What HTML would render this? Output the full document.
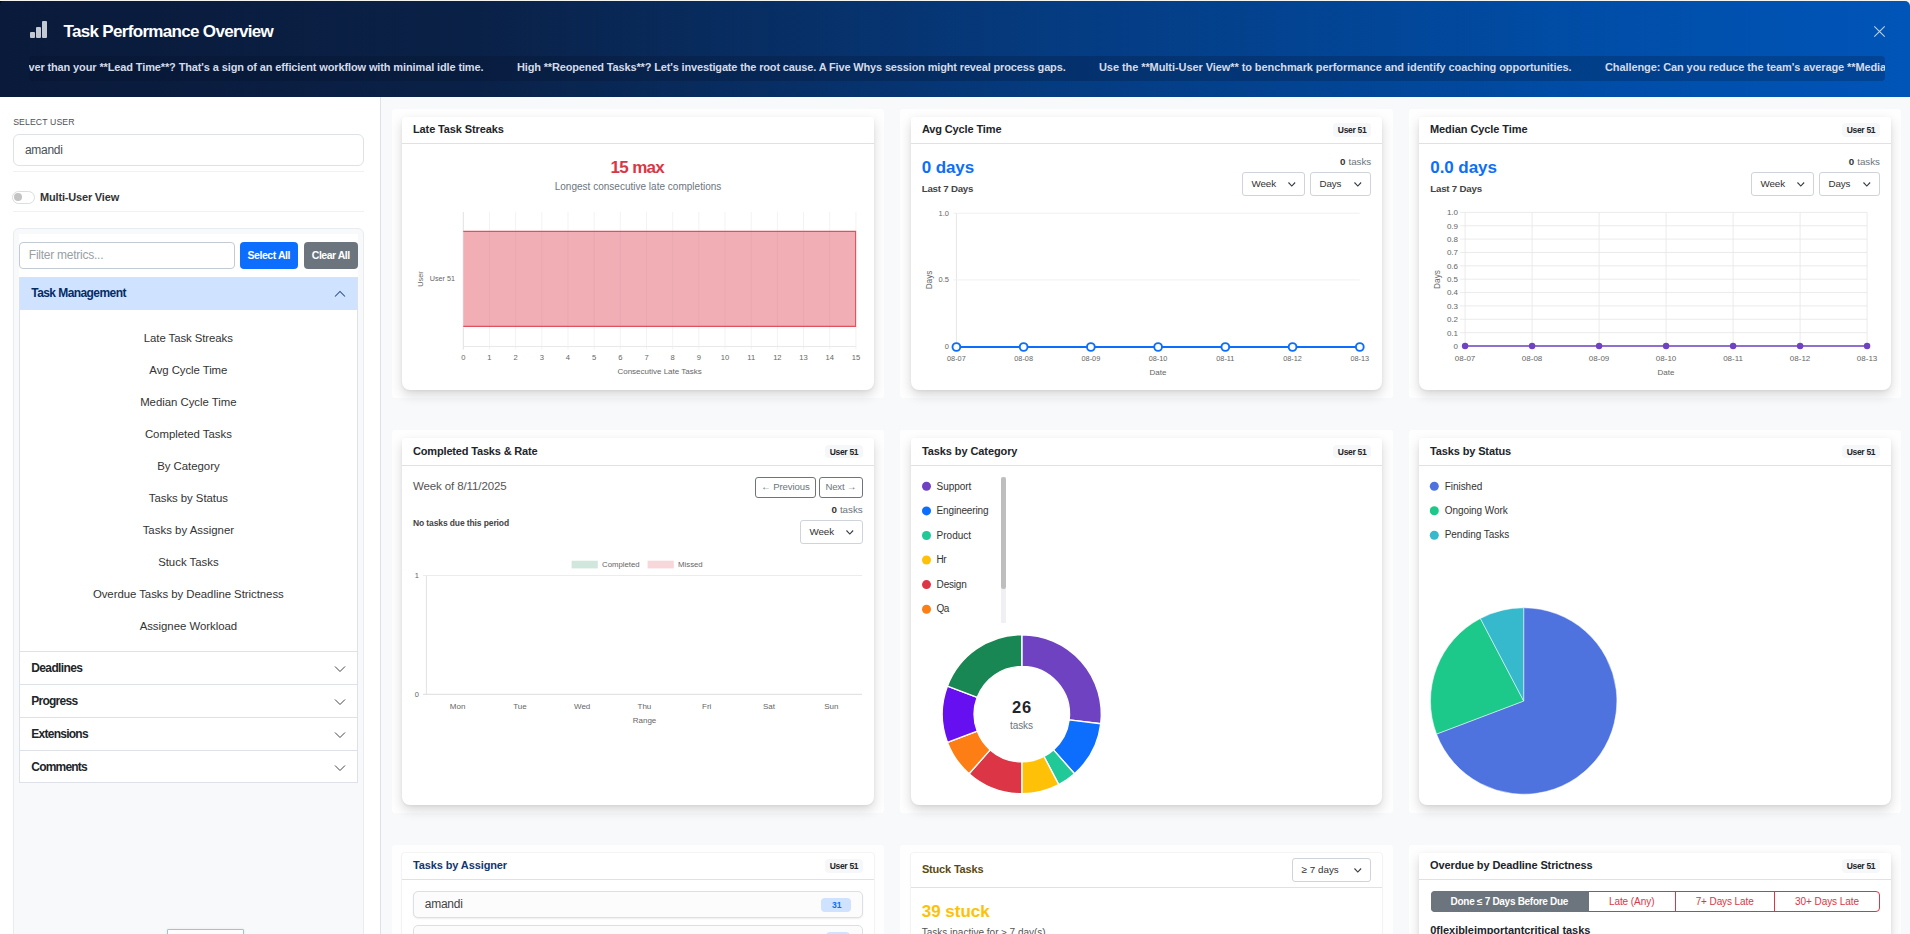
<!DOCTYPE html>
<html><head><meta charset="utf-8"><title>Task Performance Overview</title>
<style>
html,body{margin:0;padding:0;overflow:hidden;width:1910px;height:934px}
#root{position:absolute;left:0;top:0;width:1910px;height:934px;overflow:hidden;background:#f8f9fa}
body{width:1910px;height:934px;overflow:hidden;position:relative;background:#f8f9fa;font-family:"Liberation Sans",sans-serif;}
.t{position:absolute;white-space:nowrap;display:block}
.b{position:absolute;box-sizing:border-box}
svg{position:absolute;overflow:visible}
</style></head><body><div id="root">

<div class="b" style="left:0px;top:0px;width:1910px;height:2px;background:#f4f4f1;"></div>
<div class="b" style="left:0px;top:1px;width:4px;height:4px;background:#04060c;"></div>
<div class="b" style="left:0px;top:1px;width:1910px;height:96px;background:linear-gradient(90deg,#0a1a3a 0%,#0a2147 25%,#053b80 55%,#004ea9 85%,#0055b8 100%);border-radius:4px 5px 0 0;"></div>
<div class="b" style="left:0px;top:0px;width:1910px;height:1px;background:#8a93a3;opacity:.0"></div>
<div class="b" style="left:30px;top:32px;width:4.8px;height:5.799999999999997px;background:#c3c8d3;border-radius:1px;"></div>
<div class="b" style="left:36.2px;top:27px;width:4.8px;height:10.799999999999997px;background:#c3c8d3;border-radius:1px;"></div>
<div class="b" style="left:42.4px;top:21px;width:4.8px;height:16.799999999999997px;background:#c3c8d3;border-radius:1px;"></div>
<span class="t" style="left:63.50px;top:22px;font-size:17px;line-height:19px;color:#fff;font-weight:700;letter-spacing:-0.678px;">Task Performance Overview</span>
<div class="b" style="left:29px;top:56px;width:1856px;height:25px;background:rgba(3,12,35,.22);border-radius:4px;"></div>
<div class="b" style="left:29px;top:56px;width:1856px;height:25px;overflow:hidden">
<span class="t" style="left:-0.62px;top:5px;font-size:11px;line-height:12px;color:#d3dbe9;font-weight:700;letter-spacing:-0.124px;">ver than your **Lead Time**? That&#x27;s a sign of an efficient workflow with minimal idle time.</span>
<span class="t" style="left:488.00px;top:5px;font-size:11px;line-height:12px;color:#d3dbe9;font-weight:700;letter-spacing:-0.153px;">High **Reopened Tasks**? Let&#x27;s investigate the root cause. A Five Whys session might reveal process gaps.</span>
<span class="t" style="left:1070.00px;top:5px;font-size:11px;line-height:12px;color:#d3dbe9;font-weight:700;letter-spacing:-0.073px;">Use the **Multi-User View** to benchmark performance and identify coaching opportunities.</span>
<span class="t" style="left:1576.00px;top:5px;font-size:11px;line-height:12px;color:#d3dbe9;font-weight:700;letter-spacing:-0.100px;">Challenge: Can you reduce the team&#x27;s average **Median Cycle Time**</span>
</div>
<svg style="left:1874px;top:26px" width="11" height="11" viewBox="0 0 11 11"><path d="M0.3 0.3 L10.7 10.7 M10.7 0.3 L0.3 10.7" stroke="#c4d2e8" stroke-width="1.05" fill="none"/></svg>
<div class="b" style="left:0px;top:97px;width:380px;height:837px;background:#fff;"></div>
<div class="b" style="left:380px;top:97px;width:1px;height:837px;background:#dee2e6;"></div>
<span class="t" style="left:13.20px;top:117px;font-size:8.7px;line-height:10px;color:#4d5258;letter-spacing:0.111px;">SELECT USER</span>
<div class="b" style="left:13px;top:134px;width:351px;height:32px;background:#fff;border:1px solid #dee2e6;border-radius:6px;"></div>
<span class="t" style="left:25.00px;top:143px;font-size:12px;line-height:14px;color:#495057;letter-spacing:-0.309px;">amandi</span>
<div class="b" style="left:13px;top:171px;width:351px;height:1px;background:#f1f1f1;"></div>
<div class="b" style="left:12px;top:191px;width:23px;height:12.6px;background:#fff;border:1px solid #dadde1;border-radius:7px;"></div>
<div class="b" style="left:13.8px;top:193.4px;width:8px;height:8px;background:#c4c4c4;border-radius:50%;"></div>
<span class="t" style="left:40.00px;top:191px;font-size:11px;line-height:12px;color:#333;font-weight:700;letter-spacing:-0.180px;">Multi-User View</span>
<div class="b" style="left:13px;top:211px;width:351px;height:1px;background:#f1f1f1;"></div>
<div class="b" style="left:13px;top:228px;width:351px;height:720px;background:#f8f9fa;border:1px solid #e9ecef;border-radius:6px;"></div>
<div class="b" style="left:19px;top:234px;width:339px;height:44px;background:#fff;"></div>
<div class="b" style="left:19px;top:242px;width:216px;height:27px;background:#fff;border:1px solid #c2cad3;border-radius:4px;"></div>
<span class="t" style="left:28.80px;top:248px;font-size:12px;line-height:14px;color:#9aa0a6;letter-spacing:-0.245px;">Filter metrics...</span>
<div class="b" style="left:240px;top:242px;width:58px;height:27px;background:#0d6efd;border-radius:4px;"></div>
<span class="t" style="left:247.53px;top:249px;font-size:10.5px;line-height:12px;color:#fff;font-weight:700;letter-spacing:-0.438px;">Select All</span>
<div class="b" style="left:304px;top:242px;width:54px;height:27px;background:#6c757d;border-radius:4px;"></div>
<span class="t" style="left:311.77px;top:249px;font-size:10.5px;line-height:12px;color:#fff;font-weight:700;letter-spacing:-0.468px;">Clear All</span>
<div class="b" style="left:19px;top:277px;width:339px;height:506px;background:#fff;border:1px solid #dee2e6;border-top:none;"></div>
<div class="b" style="left:20px;top:278px;width:337px;height:32px;background:#cfe2ff;"></div>
<div class="b" style="left:19px;top:277px;width:339px;height:1px;background:#dee2e6;"></div>
<span class="t" style="left:31.30px;top:286px;font-size:12px;line-height:14px;color:#052c65;font-weight:700;letter-spacing:-0.576px;">Task Management</span>
<svg style="left:334px;top:289.5px" width="12" height="8" viewBox="0 0 12 8"><path d="M1 6.5 L6 1.5 L11 6.5" stroke="#2a4d85" stroke-width="1.05" fill="none"/></svg>
<span class="t" style="left:143.86px;top:332px;font-size:11.4px;line-height:12px;color:#333;letter-spacing:-0.082px;">Late Task Streaks</span>
<span class="t" style="left:149.37px;top:364px;font-size:11.4px;line-height:12px;color:#333;letter-spacing:-0.070px;">Avg Cycle Time</span>
<span class="t" style="left:140.14px;top:396px;font-size:11.4px;line-height:12px;color:#333;letter-spacing:-0.025px;">Median Cycle Time</span>
<span class="t" style="left:144.89px;top:428px;font-size:11.4px;line-height:12px;color:#333;letter-spacing:-0.015px;">Completed Tasks</span>
<span class="t" style="left:157.14px;top:460px;font-size:11.4px;line-height:12px;color:#333;letter-spacing:-0.020px;">By Category</span>
<span class="t" style="left:148.87px;top:492px;font-size:11.4px;line-height:12px;color:#333;letter-spacing:-0.055px;">Tasks by Status</span>
<span class="t" style="left:142.66px;top:524px;font-size:11.4px;line-height:12px;color:#333;letter-spacing:0.016px;">Tasks by Assigner</span>
<span class="t" style="left:158.14px;top:556px;font-size:11.4px;line-height:12px;color:#333;letter-spacing:-0.010px;">Stuck Tasks</span>
<span class="t" style="left:92.88px;top:588px;font-size:11.4px;line-height:12px;color:#333;letter-spacing:-0.039px;">Overdue Tasks by Deadline Strictness</span>
<span class="t" style="left:139.64px;top:620px;font-size:11.4px;line-height:12px;color:#333;letter-spacing:-0.030px;">Assignee Workload</span>
<div class="b" style="left:19px;top:651px;width:339px;height:1px;background:#dee2e6;"></div>
<span class="t" style="left:31.30px;top:661px;font-size:12px;line-height:14px;color:#212529;font-weight:700;letter-spacing:-0.632px;">Deadlines</span>
<svg style="left:333.5px;top:664.5px" width="12" height="8" viewBox="0 0 12 8"><path d="M1 1.5 L6 6.5 L11 1.5" stroke="#444" stroke-width="1.0" fill="none"/></svg>
<div class="b" style="left:19px;top:684px;width:339px;height:1px;background:#dee2e6;"></div>
<span class="t" style="left:31.30px;top:694px;font-size:12px;line-height:14px;color:#212529;font-weight:700;letter-spacing:-0.753px;">Progress</span>
<svg style="left:333.5px;top:697.5px" width="12" height="8" viewBox="0 0 12 8"><path d="M1 1.5 L6 6.5 L11 1.5" stroke="#444" stroke-width="1.0" fill="none"/></svg>
<div class="b" style="left:19px;top:717px;width:339px;height:1px;background:#dee2e6;"></div>
<span class="t" style="left:31.30px;top:727px;font-size:12px;line-height:14px;color:#212529;font-weight:700;letter-spacing:-0.751px;">Extensions</span>
<svg style="left:333.5px;top:730.5px" width="12" height="8" viewBox="0 0 12 8"><path d="M1 1.5 L6 6.5 L11 1.5" stroke="#444" stroke-width="1.0" fill="none"/></svg>
<div class="b" style="left:19px;top:750px;width:339px;height:1px;background:#dee2e6;"></div>
<span class="t" style="left:31.30px;top:760px;font-size:12px;line-height:14px;color:#212529;font-weight:700;letter-spacing:-0.814px;">Comments</span>
<svg style="left:333.5px;top:763.5px" width="12" height="8" viewBox="0 0 12 8"><path d="M1 1.5 L6 6.5 L11 1.5" stroke="#444" stroke-width="1.0" fill="none"/></svg>
<div class="b" style="left:167px;top:929px;width:77px;height:20px;background:#fdfdfd;border:1px solid #8ccaec;border-radius:1px;box-shadow:0 0 3px rgba(0,0,0,.08);"></div>
<div class="b" style="left:392px;top:109px;width:492.33px;height:288.6px;background:#fefefe;border-radius:3px;"></div>
<div class="b" style="left:900.3px;top:109px;width:492.33px;height:288.6px;background:#fefefe;border-radius:3px;"></div>
<div class="b" style="left:1408.9px;top:109px;width:492.33px;height:288.6px;background:#fefefe;border-radius:3px;"></div>
<div class="b" style="left:402px;top:116.8px;width:472px;height:273.2px;background:#fff;border-radius:3px 3px 8px 8px;box-shadow:0 5px 12px rgba(0,0,0,.155),0 1px 3px rgba(0,0,0,.05);"></div><div class="b" style="left:402px;top:143px;width:472px;height:1px;background:#dee2e6;"></div><span class="t" style="left:413.00px;top:123px;font-size:11px;line-height:12px;color:#212529;font-weight:700;letter-spacing:-0.119px;">Late Task Streaks</span>
<div class="b" style="left:910.9px;top:116.8px;width:471.3px;height:273.2px;background:#fff;border-radius:3px 3px 8px 8px;box-shadow:0 5px 12px rgba(0,0,0,.155),0 1px 3px rgba(0,0,0,.05);"></div><div class="b" style="left:910.9px;top:143px;width:471.3px;height:1px;background:#dee2e6;"></div><span class="t" style="left:921.90px;top:123px;font-size:11px;line-height:12px;color:#212529;font-weight:700;letter-spacing:-0.129px;">Avg Cycle Time</span><div class="b" style="left:1333.4px;top:123.10000000000001px;width:37.7px;height:13.5px;background:#f6f7f9;border-radius:4px;"></div><span class="t" style="left:1337.85px;top:125px;font-size:8.5px;line-height:10px;color:#212529;font-weight:700;letter-spacing:-0.302px;">User 51</span>
<div class="b" style="left:1419px;top:116.8px;width:472px;height:273.2px;background:#fff;border-radius:3px 3px 8px 8px;box-shadow:0 5px 12px rgba(0,0,0,.155),0 1px 3px rgba(0,0,0,.05);"></div><div class="b" style="left:1419px;top:143px;width:472px;height:1px;background:#dee2e6;"></div><span class="t" style="left:1430.00px;top:123px;font-size:11px;line-height:12px;color:#212529;font-weight:700;letter-spacing:-0.078px;">Median Cycle Time</span><div class="b" style="left:1842.2px;top:123.10000000000001px;width:37.7px;height:13.5px;background:#f6f7f9;border-radius:4px;"></div><span class="t" style="left:1846.65px;top:125px;font-size:8.5px;line-height:10px;color:#212529;font-weight:700;letter-spacing:-0.302px;">User 51</span>
<span class="t" style="left:610.60px;top:158px;font-size:17px;line-height:19px;color:#dc3545;font-weight:700;letter-spacing:-0.692px;">15 max</span>
<span class="t" style="left:554.71px;top:181px;font-size:10px;line-height:11px;color:#6c757d;letter-spacing:0.011px;">Longest consecutive late completions</span>
<span class="t" style="left:921.70px;top:158px;font-size:17px;line-height:19px;color:#0d6efd;font-weight:700;letter-spacing:-0.103px;">0 days</span>
<span class="t" style="left:921.70px;top:183px;font-size:9.7px;line-height:11px;color:#444;font-weight:700;letter-spacing:-0.210px;">Last 7 Days</span>
<span class="t" style="left:1340.05px;top:156px;font-size:9.8px;line-height:11px;color:#333;font-weight:700;">0</span>
<span class="t" style="left:1348.55px;top:156px;font-size:9.8px;line-height:11px;color:#6c757d;letter-spacing:-0.054px;">tasks</span>
<div class="b" style="left:1242px;top:172px;width:63px;height:24px;background:#fff;border:1px solid #ced4da;border-radius:3px;"></div><span class="t" style="left:1251.60px;top:178px;font-size:9.8px;line-height:11px;color:#333;letter-spacing:-0.143px;">Week</span><svg style="left:1287.6px;top:181.6px" width="7.6" height="4.8" viewBox="0 0 8 5"><path d="M0.5 0.5 L4 4.2 L7.5 0.5" stroke="#343a40" stroke-width="1.15" fill="none"/></svg>
<div class="b" style="left:1310px;top:172px;width:61px;height:24px;background:#fff;border:1px solid #ced4da;border-radius:3px;"></div><span class="t" style="left:1319.60px;top:178px;font-size:9.8px;line-height:11px;color:#333;letter-spacing:-0.182px;">Days</span><svg style="left:1353.6px;top:181.6px" width="7.6" height="4.8" viewBox="0 0 8 5"><path d="M0.5 0.5 L4 4.2 L7.5 0.5" stroke="#343a40" stroke-width="1.15" fill="none"/></svg>
<span class="t" style="left:1430.30px;top:158px;font-size:17px;line-height:19px;color:#0d6efd;font-weight:700;letter-spacing:-0.075px;">0.0 days</span>
<span class="t" style="left:1430.30px;top:183px;font-size:9.7px;line-height:11px;color:#444;font-weight:700;letter-spacing:-0.210px;">Last 7 Days</span>
<span class="t" style="left:1848.75px;top:156px;font-size:9.8px;line-height:11px;color:#333;font-weight:700;">0</span>
<span class="t" style="left:1857.25px;top:156px;font-size:9.8px;line-height:11px;color:#6c757d;letter-spacing:-0.054px;">tasks</span>
<div class="b" style="left:1751px;top:172px;width:63px;height:24px;background:#fff;border:1px solid #ced4da;border-radius:3px;"></div><span class="t" style="left:1760.60px;top:178px;font-size:9.8px;line-height:11px;color:#333;letter-spacing:-0.143px;">Week</span><svg style="left:1796.6px;top:181.6px" width="7.6" height="4.8" viewBox="0 0 8 5"><path d="M0.5 0.5 L4 4.2 L7.5 0.5" stroke="#343a40" stroke-width="1.15" fill="none"/></svg>
<div class="b" style="left:1819px;top:172px;width:61px;height:24px;background:#fff;border:1px solid #ced4da;border-radius:3px;"></div><span class="t" style="left:1828.60px;top:178px;font-size:9.8px;line-height:11px;color:#333;letter-spacing:-0.182px;">Days</span><svg style="left:1862.6px;top:181.6px" width="7.6" height="4.8" viewBox="0 0 8 5"><path d="M0.5 0.5 L4 4.2 L7.5 0.5" stroke="#343a40" stroke-width="1.15" fill="none"/></svg>
<div class="b" style="left:392px;top:430px;width:492.33px;height:383px;background:#fefefe;border-radius:3px;"></div>
<div class="b" style="left:900.3px;top:430px;width:492.33px;height:383px;background:#fefefe;border-radius:3px;"></div>
<div class="b" style="left:1408.9px;top:430px;width:492.33px;height:383px;background:#fefefe;border-radius:3px;"></div>
<div class="b" style="left:402px;top:438px;width:472px;height:367px;background:#fff;border-radius:3px 3px 8px 8px;box-shadow:0 5px 12px rgba(0,0,0,.155),0 1px 3px rgba(0,0,0,.05);"></div><div class="b" style="left:402px;top:465px;width:472px;height:1px;background:#dee2e6;"></div><span class="t" style="left:413.00px;top:445px;font-size:11px;line-height:12px;color:#212529;font-weight:700;letter-spacing:-0.166px;">Completed Tasks &amp; Rate</span><div class="b" style="left:825.2px;top:444.9px;width:37.7px;height:13.5px;background:#f6f7f9;border-radius:4px;"></div><span class="t" style="left:829.65px;top:447px;font-size:8.5px;line-height:10px;color:#212529;font-weight:700;letter-spacing:-0.302px;">User 51</span>
<div class="b" style="left:910.9px;top:438px;width:471.3px;height:367px;background:#fff;border-radius:3px 3px 8px 8px;box-shadow:0 5px 12px rgba(0,0,0,.155),0 1px 3px rgba(0,0,0,.05);"></div><div class="b" style="left:910.9px;top:465px;width:471.3px;height:1px;background:#dee2e6;"></div><span class="t" style="left:921.90px;top:445px;font-size:11px;line-height:12px;color:#212529;font-weight:700;letter-spacing:-0.088px;">Tasks by Category</span><div class="b" style="left:1333.4px;top:444.9px;width:37.7px;height:13.5px;background:#f6f7f9;border-radius:4px;"></div><span class="t" style="left:1337.85px;top:447px;font-size:8.5px;line-height:10px;color:#212529;font-weight:700;letter-spacing:-0.302px;">User 51</span>
<div class="b" style="left:1419px;top:438px;width:472px;height:367px;background:#fff;border-radius:3px 3px 8px 8px;box-shadow:0 5px 12px rgba(0,0,0,.155),0 1px 3px rgba(0,0,0,.05);"></div><div class="b" style="left:1419px;top:465px;width:472px;height:1px;background:#dee2e6;"></div><span class="t" style="left:1430.00px;top:445px;font-size:11px;line-height:12px;color:#212529;font-weight:700;letter-spacing:-0.129px;">Tasks by Status</span><div class="b" style="left:1842.2px;top:444.9px;width:37.7px;height:13.5px;background:#f6f7f9;border-radius:4px;"></div><span class="t" style="left:1846.65px;top:447px;font-size:8.5px;line-height:10px;color:#212529;font-weight:700;letter-spacing:-0.302px;">User 51</span>
<span class="t" style="left:413.00px;top:480px;font-size:11.5px;line-height:12px;color:#555;letter-spacing:-0.116px;">Week of 8/11/2025</span>
<div class="b" style="left:755px;top:477px;width:61px;height:21px;background:#fff;border:1px solid #6c757d;border-radius:3px;"></div><span class="t" style="left:761.15px;top:481px;font-size:9.6px;line-height:11px;color:#6c757d;letter-spacing:-0.102px;">← Previous</span>
<div class="b" style="left:819px;top:477px;width:44px;height:21px;background:#fff;border:1px solid #6c757d;border-radius:3px;"></div><span class="t" style="left:825.58px;top:481px;font-size:9.6px;line-height:11px;color:#6c757d;letter-spacing:-0.234px;">Next →</span>
<span class="t" style="left:831.45px;top:504px;font-size:9.8px;line-height:11px;color:#333;font-weight:700;">0</span>
<span class="t" style="left:839.89px;top:504px;font-size:9.8px;line-height:11px;color:#6c757d;letter-spacing:-0.014px;">tasks</span>
<span class="t" style="left:413.00px;top:518px;font-size:8.5px;line-height:10px;color:#444;font-weight:700;letter-spacing:-0.113px;">No tasks due this period</span>
<div class="b" style="left:800px;top:520px;width:63px;height:24px;background:#fff;border:1px solid #ced4da;border-radius:3px;"></div><span class="t" style="left:809.60px;top:526px;font-size:9.8px;line-height:11px;color:#333;letter-spacing:-0.143px;">Week</span><svg style="left:845.6px;top:529.6px" width="7.6" height="4.8" viewBox="0 0 8 5"><path d="M0.5 0.5 L4 4.2 L7.5 0.5" stroke="#343a40" stroke-width="1.15" fill="none"/></svg>
<span class="t" style="left:936.60px;top:481px;font-size:10px;line-height:11px;color:#333;letter-spacing:-0.060px;">Support</span>
<span class="t" style="left:936.60px;top:505px;font-size:10px;line-height:11px;color:#333;letter-spacing:-0.143px;">Engineering</span>
<span class="t" style="left:936.60px;top:530px;font-size:10px;line-height:11px;color:#333;letter-spacing:0.006px;">Product</span>
<span class="t" style="left:936.60px;top:554px;font-size:10px;line-height:11px;color:#333;letter-spacing:-0.526px;">Hr</span>
<span class="t" style="left:936.60px;top:579px;font-size:10px;line-height:11px;color:#333;letter-spacing:-0.188px;">Design</span>
<span class="t" style="left:936.60px;top:603px;font-size:10px;line-height:11px;color:#333;letter-spacing:-0.670px;">Qa</span>
<div class="b" style="left:1001.2px;top:477px;width:4.5px;height:145.6px;background:#f0f0f4;"></div>
<div class="b" style="left:1001.2px;top:477px;width:4.5px;height:111.6px;background:#bebebe;border-radius:2.3px;"></div>
<span class="t" style="left:1011.91px;top:698px;font-size:16.5px;line-height:18px;color:#212529;font-weight:700;letter-spacing:0.824px;">26</span>
<span class="t" style="left:1009.97px;top:720px;font-size:10px;line-height:11px;color:#6c757d;letter-spacing:-0.068px;">tasks</span>
<span class="t" style="left:1444.70px;top:481px;font-size:10px;line-height:11px;color:#333;letter-spacing:-0.037px;">Finished</span>
<span class="t" style="left:1444.70px;top:505px;font-size:10px;line-height:11px;color:#333;letter-spacing:-0.061px;">Ongoing Work</span>
<span class="t" style="left:1444.70px;top:529px;font-size:10px;line-height:11px;color:#333;letter-spacing:-0.027px;">Pending Tasks</span>
<div class="b" style="left:392px;top:845px;width:492.33px;height:120px;background:#fefefe;border-radius:3px;"></div>
<div class="b" style="left:900.3px;top:845px;width:492.33px;height:120px;background:#fefefe;border-radius:3px;"></div>
<div class="b" style="left:1408.9px;top:845px;width:492.33px;height:120px;background:#fefefe;border-radius:3px;"></div>
<div class="b" style="left:402px;top:852.5px;width:472px;height:120px;background:#fff;border-radius:3px 3px 8px 8px;box-shadow:0 0 0 1px rgba(0,0,0,.035),0 1px 3px rgba(0,0,0,.03);"></div><div class="b" style="left:402px;top:879px;width:472px;height:1px;background:#dee2e6;"></div><span class="t" style="left:413.00px;top:859px;font-size:11px;line-height:12px;color:#12376f;font-weight:700;letter-spacing:-0.116px;">Tasks by Assigner</span><div class="b" style="left:825.2px;top:859.1px;width:37.7px;height:13.5px;background:#f6f7f9;border-radius:4px;"></div><span class="t" style="left:829.65px;top:861px;font-size:8.5px;line-height:10px;color:#212529;font-weight:700;letter-spacing:-0.302px;">User 51</span>
<div class="b" style="left:910.9px;top:852.5px;width:471.3px;height:120px;background:#fff;border-radius:3px 3px 8px 8px;box-shadow:0 0 0 1px rgba(0,0,0,.035),0 1px 3px rgba(0,0,0,.03);"></div><div class="b" style="left:910.9px;top:887px;width:471.3px;height:1px;background:#dee2e6;"></div><span class="t" style="left:921.90px;top:863px;font-size:11px;line-height:12px;color:#5c4a12;font-weight:700;letter-spacing:-0.171px;">Stuck Tasks</span>
<div class="b" style="left:1419px;top:853.2px;width:472px;height:120px;background:#fff;border-radius:3px 3px 8px 8px;box-shadow:0 5px 12px rgba(0,0,0,.155),0 1px 3px rgba(0,0,0,.05);"></div><div class="b" style="left:1419px;top:879px;width:472px;height:1px;background:#dee2e6;"></div><span class="t" style="left:1430.00px;top:859px;font-size:11px;line-height:12px;color:#212529;font-weight:700;letter-spacing:-0.105px;">Overdue by Deadline Strictness</span><div class="b" style="left:1842.2px;top:859.1px;width:37.7px;height:13.5px;background:#f6f7f9;border-radius:4px;"></div><span class="t" style="left:1846.65px;top:861px;font-size:8.5px;line-height:10px;color:#212529;font-weight:700;letter-spacing:-0.302px;">User 51</span>
<div class="b" style="left:413px;top:891.4px;width:449.5px;height:27px;background:#fcfcfd;border:1px solid #dcdfe3;border-radius:5px;box-shadow:0 1px 2px rgba(0,0,0,.07);"></div>
<span class="t" style="left:424.80px;top:897px;font-size:12px;line-height:14px;color:#444;letter-spacing:-0.259px;">amandi</span>
<div class="b" style="left:821px;top:898.2px;width:29.9px;height:13.8px;background:#cfe2ff;border-radius:4px;"></div>
<span class="t" style="left:831.92px;top:900px;font-size:8.6px;line-height:10px;color:#0d6efd;font-weight:700;">31</span>
<div class="b" style="left:413px;top:925.1px;width:449.5px;height:27px;background:#fcfcfd;border:1px solid #dcdfe3;border-radius:5px;"></div>
<div class="b" style="left:825.7px;top:931.9px;width:24.7px;height:13.8px;background:#cfe2ff;border-radius:4px;"></div>
<div class="b" style="left:1292px;top:858px;width:79px;height:24px;background:#fff;border:1px solid #ced4da;border-radius:3px;"></div><span class="t" style="left:1301.60px;top:864px;font-size:9.8px;line-height:11px;color:#333;letter-spacing:0.028px;">≥ 7 days</span><svg style="left:1353.6px;top:867.6px" width="7.6" height="4.8" viewBox="0 0 8 5"><path d="M0.5 0.5 L4 4.2 L7.5 0.5" stroke="#343a40" stroke-width="1.15" fill="none"/></svg>
<span class="t" style="left:921.70px;top:902px;font-size:17px;line-height:19px;color:#ffc107;font-weight:700;letter-spacing:-0.004px;">39 stuck</span>
<span class="t" style="left:921.70px;top:927px;font-size:10px;line-height:11px;color:#555;letter-spacing:0.005px;">Tasks inactive for ≥ 7 day(s)</span>
<div class="b" style="left:1430.5px;top:891.3px;width:449.5px;height:20.6px;border:1px solid #dc3545;border-radius:4px;background:#fff;"></div>
<div class="b" style="left:1430.5px;top:891.3px;width:158px;height:20.6px;background:#6c757d;border-radius:4px 0 0 4px;"></div>
<div class="b" style="left:1675px;top:891.3px;width:1px;height:20.6px;background:#dc3545;"></div>
<div class="b" style="left:1774.3px;top:891.3px;width:1px;height:20.6px;background:#dc3545;"></div>
<span class="t" style="left:1450.61px;top:896px;font-size:10px;line-height:11px;color:#fff;font-weight:700;letter-spacing:-0.288px;">Done ≤ 7 Days Before Due</span>
<span class="t" style="left:1608.92px;top:896px;font-size:10px;line-height:11px;color:#dc3545;letter-spacing:-0.063px;">Late (Any)</span>
<span class="t" style="left:1695.65px;top:896px;font-size:10px;line-height:11px;color:#dc3545;letter-spacing:-0.100px;">7+ Days Late</span>
<span class="t" style="left:1794.97px;top:896px;font-size:10px;line-height:11px;color:#dc3545;letter-spacing:-0.059px;">30+ Days Late</span>
<span class="t" style="left:1430.30px;top:924px;font-size:11px;line-height:12px;color:#212529;font-weight:700;letter-spacing:-0.043px;">0flexibleimportantcritical tasks</span>
<svg style="left:0;top:0" width="1910" height="934">
<line x1="463.30" y1="212" x2="463.30" y2="349.5" stroke="#e2e2e2" stroke-width="1"/>
<text x="463.30" y="360.3" font-size="7.6" fill="#666" text-anchor="middle">0</text>
<line x1="489.47" y1="212" x2="489.47" y2="349.5" stroke="#f3f3f3" stroke-width="1"/>
<text x="489.47" y="360.3" font-size="7.6" fill="#666" text-anchor="middle">1</text>
<line x1="515.65" y1="212" x2="515.65" y2="349.5" stroke="#f3f3f3" stroke-width="1"/>
<text x="515.65" y="360.3" font-size="7.6" fill="#666" text-anchor="middle">2</text>
<line x1="541.82" y1="212" x2="541.82" y2="349.5" stroke="#f3f3f3" stroke-width="1"/>
<text x="541.82" y="360.3" font-size="7.6" fill="#666" text-anchor="middle">3</text>
<line x1="567.99" y1="212" x2="567.99" y2="349.5" stroke="#f3f3f3" stroke-width="1"/>
<text x="567.99" y="360.3" font-size="7.6" fill="#666" text-anchor="middle">4</text>
<line x1="594.17" y1="212" x2="594.17" y2="349.5" stroke="#f3f3f3" stroke-width="1"/>
<text x="594.17" y="360.3" font-size="7.6" fill="#666" text-anchor="middle">5</text>
<line x1="620.34" y1="212" x2="620.34" y2="349.5" stroke="#f3f3f3" stroke-width="1"/>
<text x="620.34" y="360.3" font-size="7.6" fill="#666" text-anchor="middle">6</text>
<line x1="646.51" y1="212" x2="646.51" y2="349.5" stroke="#f3f3f3" stroke-width="1"/>
<text x="646.51" y="360.3" font-size="7.6" fill="#666" text-anchor="middle">7</text>
<line x1="672.69" y1="212" x2="672.69" y2="349.5" stroke="#f3f3f3" stroke-width="1"/>
<text x="672.69" y="360.3" font-size="7.6" fill="#666" text-anchor="middle">8</text>
<line x1="698.86" y1="212" x2="698.86" y2="349.5" stroke="#f3f3f3" stroke-width="1"/>
<text x="698.86" y="360.3" font-size="7.6" fill="#666" text-anchor="middle">9</text>
<line x1="725.03" y1="212" x2="725.03" y2="349.5" stroke="#f3f3f3" stroke-width="1"/>
<text x="725.03" y="360.3" font-size="7.6" fill="#666" text-anchor="middle">10</text>
<line x1="751.21" y1="212" x2="751.21" y2="349.5" stroke="#f3f3f3" stroke-width="1"/>
<text x="751.21" y="360.3" font-size="7.6" fill="#666" text-anchor="middle">11</text>
<line x1="777.38" y1="212" x2="777.38" y2="349.5" stroke="#f3f3f3" stroke-width="1"/>
<text x="777.38" y="360.3" font-size="7.6" fill="#666" text-anchor="middle">12</text>
<line x1="803.55" y1="212" x2="803.55" y2="349.5" stroke="#f3f3f3" stroke-width="1"/>
<text x="803.55" y="360.3" font-size="7.6" fill="#666" text-anchor="middle">13</text>
<line x1="829.73" y1="212" x2="829.73" y2="349.5" stroke="#f3f3f3" stroke-width="1"/>
<text x="829.73" y="360.3" font-size="7.6" fill="#666" text-anchor="middle">14</text>
<line x1="855.90" y1="212" x2="855.90" y2="349.5" stroke="#f3f3f3" stroke-width="1"/>
<text x="855.90" y="360.3" font-size="7.6" fill="#666" text-anchor="middle">15</text>
<line x1="463.3" y1="346.5" x2="855.9" y2="346.5" stroke="#e9e9e9" stroke-width="1"/>
<rect x="463.3" y="231.4" width="392.59999999999997" height="95" fill="#f1aeb5"/>
<line x1="489.47" y1="232" x2="489.47" y2="326" stroke="#eba8af" stroke-width="1"/>
<line x1="515.65" y1="232" x2="515.65" y2="326" stroke="#eba8af" stroke-width="1"/>
<line x1="541.82" y1="232" x2="541.82" y2="326" stroke="#eba8af" stroke-width="1"/>
<line x1="567.99" y1="232" x2="567.99" y2="326" stroke="#eba8af" stroke-width="1"/>
<line x1="594.17" y1="232" x2="594.17" y2="326" stroke="#eba8af" stroke-width="1"/>
<line x1="620.34" y1="232" x2="620.34" y2="326" stroke="#eba8af" stroke-width="1"/>
<line x1="646.51" y1="232" x2="646.51" y2="326" stroke="#eba8af" stroke-width="1"/>
<line x1="672.69" y1="232" x2="672.69" y2="326" stroke="#eba8af" stroke-width="1"/>
<line x1="698.86" y1="232" x2="698.86" y2="326" stroke="#eba8af" stroke-width="1"/>
<line x1="725.03" y1="232" x2="725.03" y2="326" stroke="#eba8af" stroke-width="1"/>
<line x1="751.21" y1="232" x2="751.21" y2="326" stroke="#eba8af" stroke-width="1"/>
<line x1="777.38" y1="232" x2="777.38" y2="326" stroke="#eba8af" stroke-width="1"/>
<line x1="803.55" y1="232" x2="803.55" y2="326" stroke="#eba8af" stroke-width="1"/>
<line x1="829.73" y1="232" x2="829.73" y2="326" stroke="#eba8af" stroke-width="1"/>
<path d="M463.3 231.4 H855.6 V326.4 H463.3" fill="none" stroke="#e0505e" stroke-width="1.1"/>
<text x="455" y="280.8" font-size="7.2" fill="#666" text-anchor="end">User 51</text>
<text transform="translate(422.5,279) rotate(-90)" font-size="7.3" fill="#666" text-anchor="middle">User</text>
<text x="659.6" y="374.2" font-size="8" fill="#666" text-anchor="middle">Consecutive Late Tasks</text>
<line x1="956.4" y1="213" x2="956.4" y2="346.6" stroke="#e6e6e6"/>
<line x1="953.4" y1="213.2" x2="1359.8" y2="213.2" stroke="#f0f0f0"/>
<text x="949" y="215.7" font-size="7.5" fill="#666" text-anchor="end">1.0</text>
<line x1="953.4" y1="279.9" x2="1359.8" y2="279.9" stroke="#f0f0f0"/>
<text x="949" y="282.4" font-size="7.5" fill="#666" text-anchor="end">0.5</text>
<line x1="953.4" y1="346.6" x2="1359.8" y2="346.6" stroke="#f0f0f0"/>
<text x="949" y="349.1" font-size="7.5" fill="#666" text-anchor="end">0</text>
<line x1="956.4" y1="347" x2="1359.8" y2="347" stroke="#0d6efd" stroke-width="2"/>
<circle cx="956.40" cy="347" r="3.9" fill="#fff" stroke="#0d6efd" stroke-width="1.9"/>
<text x="956.40" y="361.1" font-size="7.3" fill="#666" text-anchor="middle">08-07</text>
<circle cx="1023.63" cy="347" r="3.9" fill="#fff" stroke="#0d6efd" stroke-width="1.9"/>
<text x="1023.63" y="361.1" font-size="7.3" fill="#666" text-anchor="middle">08-08</text>
<circle cx="1090.87" cy="347" r="3.9" fill="#fff" stroke="#0d6efd" stroke-width="1.9"/>
<text x="1090.87" y="361.1" font-size="7.3" fill="#666" text-anchor="middle">08-09</text>
<circle cx="1158.10" cy="347" r="3.9" fill="#fff" stroke="#0d6efd" stroke-width="1.9"/>
<text x="1158.10" y="361.1" font-size="7.3" fill="#666" text-anchor="middle">08-10</text>
<circle cx="1225.33" cy="347" r="3.9" fill="#fff" stroke="#0d6efd" stroke-width="1.9"/>
<text x="1225.33" y="361.1" font-size="7.3" fill="#666" text-anchor="middle">08-11</text>
<circle cx="1292.57" cy="347" r="3.9" fill="#fff" stroke="#0d6efd" stroke-width="1.9"/>
<text x="1292.57" y="361.1" font-size="7.3" fill="#666" text-anchor="middle">08-12</text>
<circle cx="1359.80" cy="347" r="3.9" fill="#fff" stroke="#0d6efd" stroke-width="1.9"/>
<text x="1359.80" y="361.1" font-size="7.3" fill="#666" text-anchor="middle">08-13</text>
<text transform="translate(932,280) rotate(-90)" font-size="8.2" fill="#666" text-anchor="middle">Days</text>
<text x="1158" y="375" font-size="8" fill="#666" text-anchor="middle">Date</text>
<line x1="1460.1" y1="212.40" x2="1867.1" y2="212.40" stroke="#e6e6e6" stroke-width="0.8"/>
<text x="1458" y="215.30" font-size="8" fill="#666" text-anchor="end">1.0</text>
<line x1="1460.1" y1="225.76" x2="1867.1" y2="225.76" stroke="#e6e6e6" stroke-width="0.8"/>
<text x="1458" y="228.66" font-size="8" fill="#666" text-anchor="end">0.9</text>
<line x1="1460.1" y1="239.12" x2="1867.1" y2="239.12" stroke="#e6e6e6" stroke-width="0.8"/>
<text x="1458" y="242.02" font-size="8" fill="#666" text-anchor="end">0.8</text>
<line x1="1460.1" y1="252.48" x2="1867.1" y2="252.48" stroke="#e6e6e6" stroke-width="0.8"/>
<text x="1458" y="255.38" font-size="8" fill="#666" text-anchor="end">0.7</text>
<line x1="1460.1" y1="265.84" x2="1867.1" y2="265.84" stroke="#e6e6e6" stroke-width="0.8"/>
<text x="1458" y="268.74" font-size="8" fill="#666" text-anchor="end">0.6</text>
<line x1="1460.1" y1="279.20" x2="1867.1" y2="279.20" stroke="#e6e6e6" stroke-width="0.8"/>
<text x="1458" y="282.10" font-size="8" fill="#666" text-anchor="end">0.5</text>
<line x1="1460.1" y1="292.56" x2="1867.1" y2="292.56" stroke="#e6e6e6" stroke-width="0.8"/>
<text x="1458" y="295.46" font-size="8" fill="#666" text-anchor="end">0.4</text>
<line x1="1460.1" y1="305.92" x2="1867.1" y2="305.92" stroke="#e6e6e6" stroke-width="0.8"/>
<text x="1458" y="308.82" font-size="8" fill="#666" text-anchor="end">0.3</text>
<line x1="1460.1" y1="319.28" x2="1867.1" y2="319.28" stroke="#e6e6e6" stroke-width="0.8"/>
<text x="1458" y="322.18" font-size="8" fill="#666" text-anchor="end">0.2</text>
<line x1="1460.1" y1="332.64" x2="1867.1" y2="332.64" stroke="#e6e6e6" stroke-width="0.8"/>
<text x="1458" y="335.54" font-size="8" fill="#666" text-anchor="end">0.1</text>
<line x1="1460.1" y1="346.00" x2="1867.1" y2="346.00" stroke="#e6e6e6" stroke-width="0.8"/>
<text x="1458" y="348.90" font-size="8" fill="#666" text-anchor="end">0</text>
<line x1="1465.10" y1="212.4" x2="1465.10" y2="349.0" stroke="#e6e6e6" stroke-width="0.8"/>
<line x1="1532.10" y1="212.4" x2="1532.10" y2="349.0" stroke="#e6e6e6" stroke-width="0.8"/>
<line x1="1599.10" y1="212.4" x2="1599.10" y2="349.0" stroke="#e6e6e6" stroke-width="0.8"/>
<line x1="1666.10" y1="212.4" x2="1666.10" y2="349.0" stroke="#e6e6e6" stroke-width="0.8"/>
<line x1="1733.10" y1="212.4" x2="1733.10" y2="349.0" stroke="#e6e6e6" stroke-width="0.8"/>
<line x1="1800.10" y1="212.4" x2="1800.10" y2="349.0" stroke="#e6e6e6" stroke-width="0.8"/>
<line x1="1867.10" y1="212.4" x2="1867.10" y2="349.0" stroke="#e6e6e6" stroke-width="0.8"/>
<line x1="1465.1" y1="346.0" x2="1867.1" y2="346.0" stroke="#6f42c1" stroke-width="1.6"/>
<circle cx="1465.10" cy="346.0" r="3.2" fill="#6f42c1"/>
<text x="1465.10" y="361" font-size="8" fill="#666" text-anchor="middle">08-07</text>
<circle cx="1532.10" cy="346.0" r="3.2" fill="#6f42c1"/>
<text x="1532.10" y="361" font-size="8" fill="#666" text-anchor="middle">08-08</text>
<circle cx="1599.10" cy="346.0" r="3.2" fill="#6f42c1"/>
<text x="1599.10" y="361" font-size="8" fill="#666" text-anchor="middle">08-09</text>
<circle cx="1666.10" cy="346.0" r="3.2" fill="#6f42c1"/>
<text x="1666.10" y="361" font-size="8" fill="#666" text-anchor="middle">08-10</text>
<circle cx="1733.10" cy="346.0" r="3.2" fill="#6f42c1"/>
<text x="1733.10" y="361" font-size="8" fill="#666" text-anchor="middle">08-11</text>
<circle cx="1800.10" cy="346.0" r="3.2" fill="#6f42c1"/>
<text x="1800.10" y="361" font-size="8" fill="#666" text-anchor="middle">08-12</text>
<circle cx="1867.10" cy="346.0" r="3.2" fill="#6f42c1"/>
<text x="1867.10" y="361" font-size="8" fill="#666" text-anchor="middle">08-13</text>
<text transform="translate(1439.5,279.5) rotate(-90)" font-size="8.3" fill="#666" text-anchor="middle">Days</text>
<text x="1666" y="375" font-size="8" fill="#666" text-anchor="middle">Date</text>
<rect x="571.6" y="560.7" width="26.2" height="7.7" fill="#d1e7dd"/>
<text x="602" y="567.3" font-size="7.8" fill="#666">Completed</text>
<rect x="647.6" y="560.7" width="26.2" height="7.7" fill="#f8d7da"/>
<text x="678" y="567.3" font-size="7.8" fill="#666">Missed</text>
<line x1="426.4" y1="575.5" x2="426.4" y2="694.3" stroke="#e2e2e2"/>
<line x1="423" y1="575.5" x2="862" y2="575.5" stroke="#ececec"/>
<line x1="423" y1="694.3" x2="862" y2="694.3" stroke="#dddddd"/>
<text x="419" y="578" font-size="7.5" fill="#666" text-anchor="end">1</text>
<text x="419" y="697" font-size="7.5" fill="#666" text-anchor="end">0</text>
<text x="457.60" y="708.9" font-size="8" fill="#666" text-anchor="middle">Mon</text>
<text x="519.88" y="708.9" font-size="8" fill="#666" text-anchor="middle">Tue</text>
<text x="582.16" y="708.9" font-size="8" fill="#666" text-anchor="middle">Wed</text>
<text x="644.44" y="708.9" font-size="8" fill="#666" text-anchor="middle">Thu</text>
<text x="706.72" y="708.9" font-size="8" fill="#666" text-anchor="middle">Fri</text>
<text x="769.00" y="708.9" font-size="8" fill="#666" text-anchor="middle">Sat</text>
<text x="831.28" y="708.9" font-size="8" fill="#666" text-anchor="middle">Sun</text>
<text x="644.5" y="722.9" font-size="8" fill="#666" text-anchor="middle">Range</text>
<circle cx="926.5" cy="486.30" r="4.5" fill="#6f42c1"/>
<circle cx="926.5" cy="510.88" r="4.5" fill="#0d6efd"/>
<circle cx="926.5" cy="535.46" r="4.5" fill="#20c997"/>
<circle cx="926.5" cy="560.04" r="4.5" fill="#ffc107"/>
<circle cx="926.5" cy="584.62" r="4.5" fill="#dc3545"/>
<circle cx="926.5" cy="609.20" r="4.5" fill="#fd7e14"/>
<path d="M1021.80 634.70 A79.5 79.5 0 0 1 1100.72 723.78 L1069.15 719.95 A47.7 47.7 0 0 0 1021.80 666.50 Z" fill="#6f42c1" stroke="#fff" stroke-width="1.35" stroke-linejoin="round"/>
<path d="M1100.72 723.78 A79.5 79.5 0 0 1 1074.52 773.71 L1053.43 749.90 A47.7 47.7 0 0 0 1069.15 719.95 Z" fill="#0d6efd" stroke="#fff" stroke-width="1.35" stroke-linejoin="round"/>
<path d="M1074.52 773.71 A79.5 79.5 0 0 1 1058.75 784.59 L1043.97 756.44 A47.7 47.7 0 0 0 1053.43 749.90 Z" fill="#20c997" stroke="#fff" stroke-width="1.35" stroke-linejoin="round"/>
<path d="M1058.75 784.59 A79.5 79.5 0 0 1 1021.80 793.70 L1021.80 761.90 A47.7 47.7 0 0 0 1043.97 756.44 Z" fill="#ffc107" stroke="#fff" stroke-width="1.35" stroke-linejoin="round"/>
<path d="M1021.80 793.70 A79.5 79.5 0 0 1 969.08 773.71 L990.17 749.90 A47.7 47.7 0 0 0 1021.80 761.90 Z" fill="#dc3545" stroke="#fff" stroke-width="1.35" stroke-linejoin="round"/>
<path d="M969.08 773.71 A79.5 79.5 0 0 1 947.47 742.39 L977.20 731.11 A47.7 47.7 0 0 0 990.17 749.90 Z" fill="#fd7e14" stroke="#fff" stroke-width="1.35" stroke-linejoin="round"/>
<path d="M947.47 742.39 A79.5 79.5 0 0 1 947.47 686.01 L977.20 697.29 A47.7 47.7 0 0 0 977.20 731.11 Z" fill="#6610f2" stroke="#fff" stroke-width="1.35" stroke-linejoin="round"/>
<path d="M947.47 686.01 A79.5 79.5 0 0 1 1021.80 634.70 L1021.80 666.50 A47.7 47.7 0 0 0 977.20 697.29 Z" fill="#198754" stroke="#fff" stroke-width="1.35" stroke-linejoin="round"/>
<circle cx="1434.3" cy="486.30" r="4.5" fill="#4e73df"/>
<circle cx="1434.3" cy="510.80" r="4.5" fill="#1cc88a"/>
<circle cx="1434.3" cy="535.30" r="4.5" fill="#36b9cc"/>
<path d="M1523.7 701 L1523.70 607.80 A93.2 93.2 0 1 1 1436.56 734.05 Z" fill="#4e73df" stroke="rgba(255,255,255,.55)" stroke-width="0.9" stroke-linejoin="round"/>
<path d="M1523.7 701 L1436.56 734.05 A93.2 93.2 0 0 1 1480.39 618.48 Z" fill="#1cc88a" stroke="rgba(255,255,255,.55)" stroke-width="0.9" stroke-linejoin="round"/>
<path d="M1523.7 701 L1480.39 618.48 A93.2 93.2 0 0 1 1523.70 607.80 Z" fill="#36b9cc" stroke="rgba(255,255,255,.55)" stroke-width="0.9" stroke-linejoin="round"/>
</svg>
</div></body></html>
